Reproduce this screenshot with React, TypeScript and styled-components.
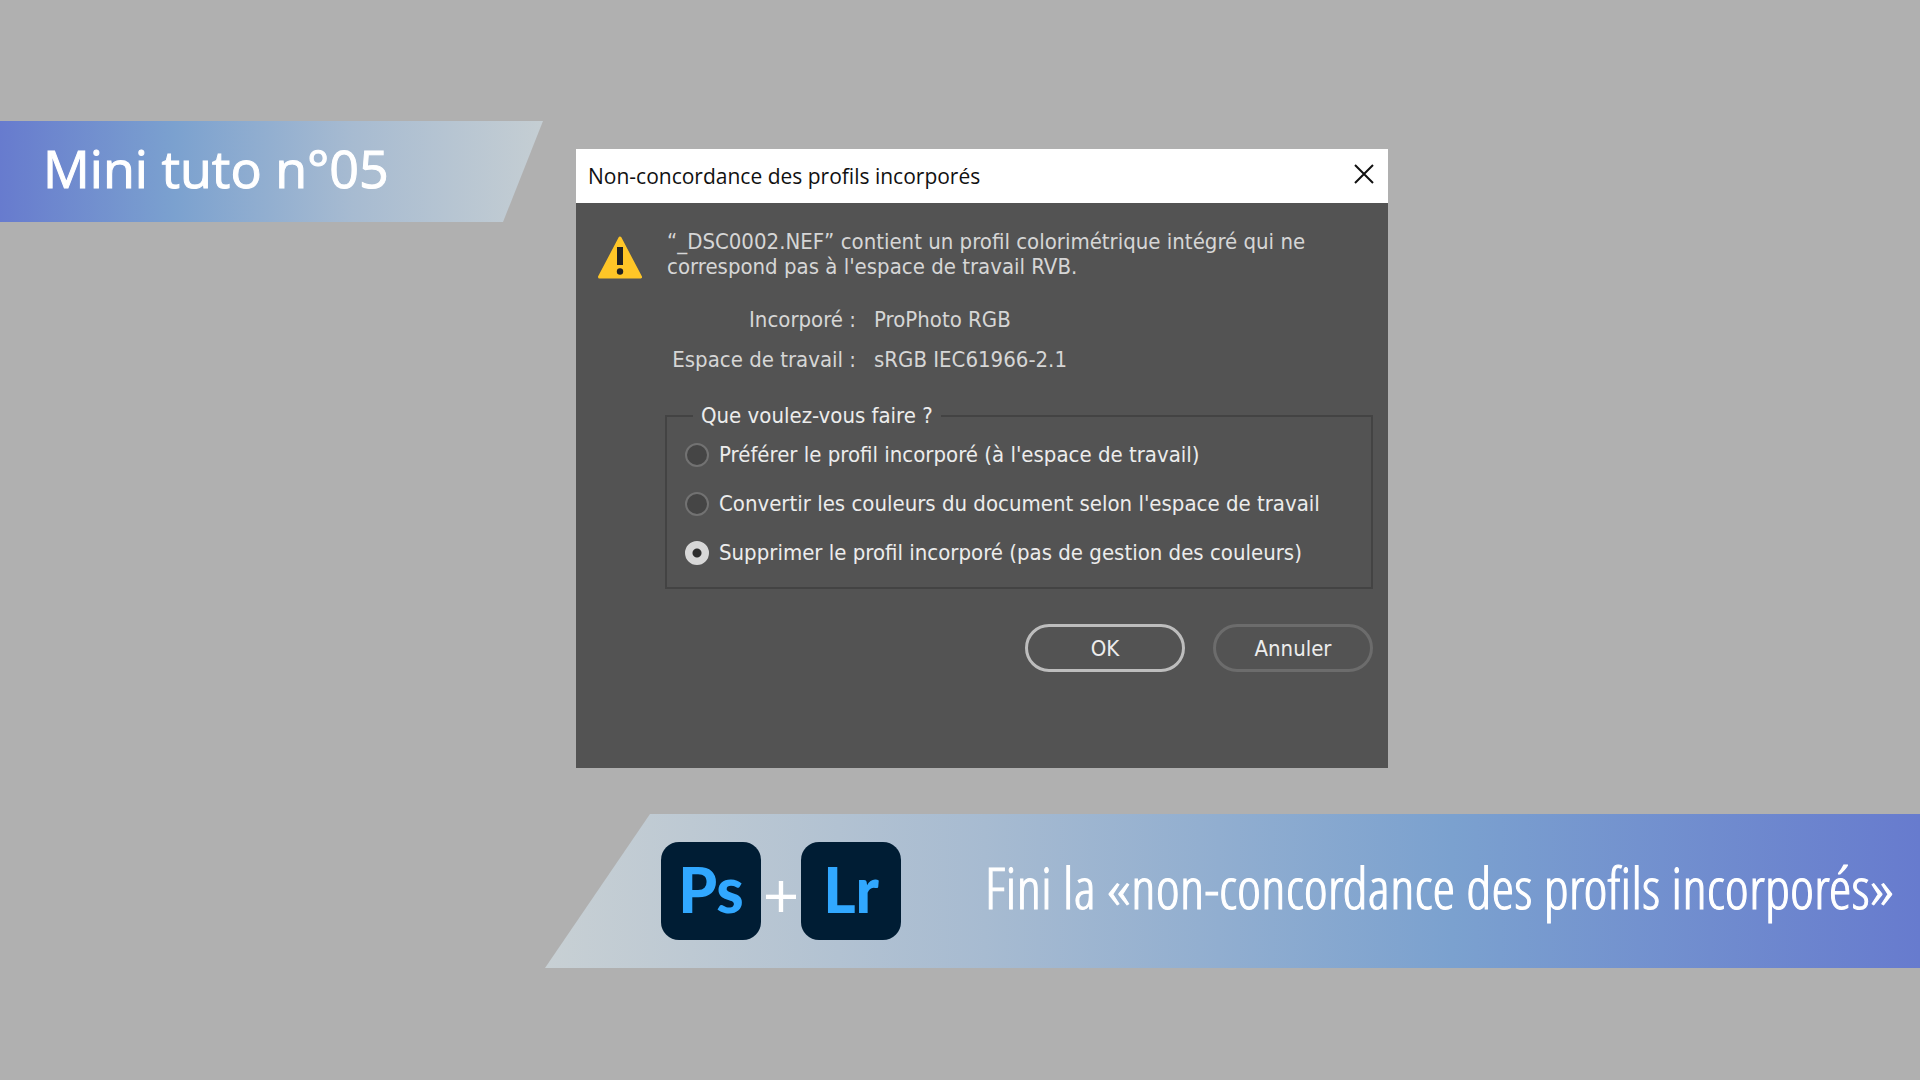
import React, { useState } from "react";
import styled, { createGlobalStyle } from "styled-components";

const GlobalStyle = createGlobalStyle`
  *, *::before, *::after { box-sizing: border-box; }
  body { margin: 0; background: #b0b0b0; }
`;

const humanist = `"Open Sans", "Noto Sans", sans-serif`;
const dialogFont = `"DejaVu Sans Condensed", "DejaVu Sans", sans-serif`;

const Page = styled.div`
  display: flex;
  flex-direction: column;
  min-height: 100vh;
  padding: 121px 0 112px;
`;

const Stage = styled.main`
  display: grid;
  grid-template-columns: 30% minmax(0, 812px);
  align-items: start;
`;

const EpisodeBanner = styled.header`
  display: flex;
  align-items: center;
  height: 101px;
  margin-right: 33px;
  padding: 0 0 8px 43px;
  background: linear-gradient(90deg, #677bce 0%, #7ba1cf 32%, #a7bbd1 65%, #c5ced3 100%);
  clip-path: polygon(0 0, 100% 0, calc(100% - 40px) 100%, 0 100%);
`;

const EpisodeTitle = styled.h1`
  margin: 0;
  color: #fff;
  font: 400 52px/60px ${humanist};
  -webkit-text-stroke: 1px #fff;
  white-space: nowrap;
`;

const Dialog = styled.section`
  margin-top: 28px;
  background: #535353;
  color: #d6d6d6;
  font: 400 22px/25px ${dialogFont};
`;

const TitleBar = styled.div`
  display: flex;
  align-items: center;
  justify-content: space-between;
  height: 54px;
  padding: 0 8px 0 12px;
  background: #fff;
  color: #111;
`;

const DialogTitle = styled.h2`
  margin: 0;
  font: 400 21px/28px ${humanist};
`;

const CloseButton = styled.button`
  display: grid;
  place-items: center;
  width: 32px;
  height: 32px;
  padding: 0 0 4px;
  border: 0;
  background: transparent;
  color: #111;
`;

const DialogBody = styled.div`
  display: grid;
  grid-template-columns: 69px minmax(0, 1fr);
  column-gap: 20px;
  padding: 26px 15px 96px 0;
`;

const AlertIcon = styled.svg`
  width: 46px;
  height: 44px;
  margin: 6px 0 0 21px;
`;

const Message = styled.p`
  margin: 0 0 28px 2px;
`;

const Facts = styled.dl`
  display: grid;
  grid-template-columns: 191px 1fr;
  gap: 15px 18px;
  margin: 0 0 31px;
`;

const FactName = styled.dt`
  text-align: right;
  white-space: nowrap;
`;

const FactValue = styled.dd`
  margin: 0;
`;

const Choices = styled.fieldset`
  display: flex;
  flex-direction: column;
  gap: 24px;
  min-width: 0;
  margin: 0;
  padding: 14px 18px 22px;
  border: 2px solid #434343;
  color: #ececec;
`;

const ChoicesLegend = styled.legend`
  margin-left: 8px;
  padding: 0 8px;
`;

const Choice = styled.label`
  display: flex;
  align-items: center;
  gap: 10px;
  white-space: nowrap;
`;

const Radio = styled.input`
  appearance: none;
  flex: none;
  width: 24px;
  height: 24px;
  margin: 0;
  border: 2px solid #727272;
  border-radius: 50%;
  background: #454545;

  &:checked {
    border-color: #d8d8d8;
    background: radial-gradient(circle, #2f2f2f 4px, #d8d8d8 5px);
  }
`;

const Actions = styled.div`
  display: flex;
  justify-content: flex-end;
  gap: 28px;
  margin-top: 35px;
`;

const ActionButton = styled.button<{ $primary?: boolean }>`
  width: 160px;
  height: 48px;
  padding: 0;
  border: ${(p) => (p.$primary ? "3px solid #bdbdbd" : "3px solid #6c6c6c")};
  border-radius: 24px;
  background: transparent;
  color: #ececec;
  font: inherit;
`;

const TopicBanner = styled.footer`
  display: flex;
  align-items: center;
  justify-content: space-between;
  height: 154px;
  margin: 46px 0 0 545px;
  padding: 0 26px 0 116px;
  background: linear-gradient(270deg, #677bce 0%, #7ba1cf 34%, #a7bbd1 68%, #c8d0d4 100%);
  clip-path: polygon(105px 0, 100% 0, 100% 100%, 0 100%);
  color: #fff;
`;

const Apps = styled.div`
  display: flex;
  align-items: center;
`;

const AppTile = styled.span`
  display: grid;
  place-items: center;
  width: 100px;
  height: 98px;
  padding-bottom: 4px;
  border-radius: 18px;
  background: #001d34;
  color: #31a8ff;
  font: 900 62px/72px Lato, sans-serif;
`;

const Plus = styled.span`
  width: 40px;
  padding-top: 8px;
  font: 400 64px/64px ${humanist};
  text-align: center;
`;

const Topic = styled.p`
  margin: 0;
  padding-bottom: 8px;
  font: 300 58px/72px "Open Sans Condensed Light", "Open Sans Condensed", "Roboto Condensed", Lato, sans-serif;
  -webkit-text-stroke: 1px #fff;
  white-space: nowrap;
`;

const options = [
  "Préférer le profil incorporé (à l'espace de travail)",
  "Convertir les couleurs du document selon l'espace de travail",
  "Supprimer le profil incorporé (pas de gestion des couleurs)",
];

export default function App() {
  const [selected, setSelected] = useState(2);

  return (
    <Page>
      <GlobalStyle />
      <Stage>
        <EpisodeBanner>
          <EpisodeTitle>Mini tuto n°05</EpisodeTitle>
        </EpisodeBanner>
        <Dialog role="dialog" aria-labelledby="dialog-title">
          <TitleBar>
            <DialogTitle id="dialog-title">Non-concordance des profils incorporés</DialogTitle>
            <CloseButton type="button" aria-label="Fermer">
              <svg width="20" height="20" viewBox="0 0 20 20" fill="none" stroke="currentColor" strokeWidth="2">
                <path d="M1 1 19 19M19 1 1 19" />
              </svg>
            </CloseButton>
          </TitleBar>
          <DialogBody>
            <AlertIcon viewBox="0 0 46 44" aria-hidden="true">
              <path d="M23 3 43.500 42H2.500Z" fill="#ffc627" stroke="#ffc627" strokeWidth="3" strokeLinejoin="round" />
              <path d="M20 12h6v18h-6z" fill="#222" />
              <circle cx="23" cy="36.500" r="3.200" fill="#222" />
            </AlertIcon>
            <div>
              <Message>
                “_DSC0002.NEF” contient un profil colorimétrique intégré qui ne
                <br />
                correspond pas à l'espace de travail RVB.
              </Message>
              <Facts>
                <FactName>Incorporé :</FactName>
                <FactValue>ProPhoto RGB</FactValue>
                <FactName>Espace de travail :</FactName>
                <FactValue>sRGB IEC61966-2.1</FactValue>
              </Facts>
              <Choices>
                <ChoicesLegend>Que voulez-vous faire ?</ChoicesLegend>
                {options.map((text, i) => (
                  <Choice key={text}>
                    <Radio type="radio" name="profil" checked={selected === i} onChange={() => setSelected(i)} />
                    {text}
                  </Choice>
                ))}
              </Choices>
              <Actions>
                <ActionButton type="button" $primary>OK</ActionButton>
                <ActionButton type="button">Annuler</ActionButton>
              </Actions>
            </div>
          </DialogBody>
        </Dialog>
      </Stage>
      <TopicBanner>
        <Apps>
          <AppTile>Ps</AppTile>
          <Plus>+</Plus>
          <AppTile>Lr</AppTile>
        </Apps>
        <Topic>Fini la «non-concordance des profils incorporés»</Topic>
      </TopicBanner>
    </Page>
  );
}
